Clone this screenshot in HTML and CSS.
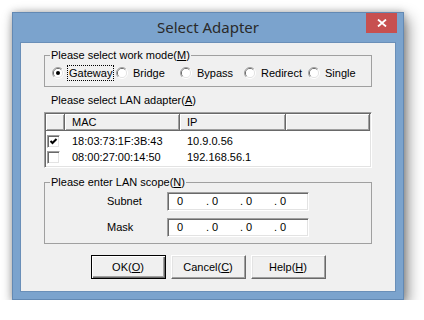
FILE: index.html
```html
<!DOCTYPE html>
<html>
<head>
<meta charset="utf-8">
<link rel="stylesheet" href="styles.css">
</head>
<body>
<div class="window">
  <div class="titlebar">
    <div></div>
    <div class="title">Select Adapter</div>
    <div class="tb-end">
      <div class="close">
        <svg width="10" height="8" viewBox="0 0 10 8"><path d="M1 0.5 L9 7.5 M9 0.5 L1 7.5" stroke="#fff" stroke-width="1.8" fill="none"/></svg>
      </div>
    </div>
  </div>
  <div class="client">
    <fieldset class="group mode">
      <legend>Please select work mode(<u>M</u>)</legend>
      <div class="radios">
        <div class="radio">
          <svg class="rb" viewBox="0 0 12 12"><path d="M2.1 9.9 A5.5 5.5 0 0 1 9.9 2.1" stroke="#a0a0a0" fill="none"/><path d="M9.9 2.1 A5.5 5.5 0 0 1 2.1 9.9" stroke="#fff" fill="none"/><path d="M2.8 9.2 A4.5 4.5 0 0 1 9.2 2.8" stroke="#696969" fill="none"/><path d="M9.2 2.8 A4.5 4.5 0 0 1 2.8 9.2" stroke="#e3e3e3" fill="none"/><circle cx="6" cy="6" r="4" fill="#fff"/><circle cx="6" cy="6" r="2" fill="#000"/></svg>
          <span class="rl focus">Gateway</span>
        </div>
        <div class="radio">
          <svg class="rb" viewBox="0 0 12 12"><path d="M2.1 9.9 A5.5 5.5 0 0 1 9.9 2.1" stroke="#a0a0a0" fill="none"/><path d="M9.9 2.1 A5.5 5.5 0 0 1 2.1 9.9" stroke="#fff" fill="none"/><path d="M2.8 9.2 A4.5 4.5 0 0 1 9.2 2.8" stroke="#696969" fill="none"/><path d="M9.2 2.8 A4.5 4.5 0 0 1 2.8 9.2" stroke="#e3e3e3" fill="none"/><circle cx="6" cy="6" r="4" fill="#fff"/></svg>
          <span class="rl">Bridge</span>
        </div>
        <div class="radio">
          <svg class="rb" viewBox="0 0 12 12"><path d="M2.1 9.9 A5.5 5.5 0 0 1 9.9 2.1" stroke="#a0a0a0" fill="none"/><path d="M9.9 2.1 A5.5 5.5 0 0 1 2.1 9.9" stroke="#fff" fill="none"/><path d="M2.8 9.2 A4.5 4.5 0 0 1 9.2 2.8" stroke="#696969" fill="none"/><path d="M9.2 2.8 A4.5 4.5 0 0 1 2.8 9.2" stroke="#e3e3e3" fill="none"/><circle cx="6" cy="6" r="4" fill="#fff"/></svg>
          <span class="rl">Bypass</span>
        </div>
        <div class="radio">
          <svg class="rb" viewBox="0 0 12 12"><path d="M2.1 9.9 A5.5 5.5 0 0 1 9.9 2.1" stroke="#a0a0a0" fill="none"/><path d="M9.9 2.1 A5.5 5.5 0 0 1 2.1 9.9" stroke="#fff" fill="none"/><path d="M2.8 9.2 A4.5 4.5 0 0 1 9.2 2.8" stroke="#696969" fill="none"/><path d="M9.2 2.8 A4.5 4.5 0 0 1 2.8 9.2" stroke="#e3e3e3" fill="none"/><circle cx="6" cy="6" r="4" fill="#fff"/></svg>
          <span class="rl">Redirect</span>
        </div>
        <div class="radio">
          <svg class="rb" viewBox="0 0 12 12"><path d="M2.1 9.9 A5.5 5.5 0 0 1 9.9 2.1" stroke="#a0a0a0" fill="none"/><path d="M9.9 2.1 A5.5 5.5 0 0 1 2.1 9.9" stroke="#fff" fill="none"/><path d="M2.8 9.2 A4.5 4.5 0 0 1 9.2 2.8" stroke="#696969" fill="none"/><path d="M9.2 2.8 A4.5 4.5 0 0 1 2.8 9.2" stroke="#e3e3e3" fill="none"/><circle cx="6" cy="6" r="4" fill="#fff"/></svg>
          <span class="rl">Single</span>
        </div>
      </div>
    </fieldset>

    <div class="label">Please select LAN adapter(<u>A</u>)</div>

    <div class="list">
      <div class="lv-head">
        <div class="hc"></div>
        <div class="hc">MAC</div>
        <div class="hc">IP</div>
        <div class="hc"></div>
      </div>
      <div class="lv-row first">
        <div class="cbcell"><div class="cb"><svg width="11" height="11" viewBox="0 0 11 11"><path d="M2.5 5 L4.5 7 L8.5 3" stroke="#000" stroke-width="2" fill="none"/></svg></div></div>
        <div class="cell">18:03:73:1F:3B:43</div>
        <div class="cell">10.9.0.56</div>
        <div></div>
      </div>
      <div class="lv-row">
        <div class="cbcell"><div class="cb"></div></div>
        <div class="cell">08:00:27:00:14:50</div>
        <div class="cell">192.168.56.1</div>
        <div></div>
      </div>
    </div>

    <fieldset class="group scope">
      <legend>Please enter LAN scope(<u>N</u>)</legend>
      <div class="frow">
        <span class="flabel">Subnet</span>
        <div class="ip"><span class="o1">0</span><span class="oc">.<b>0</b></span><span class="oc">.<b>0</b></span><span class="oc">.<b>0</b></span></div>
      </div>
      <div class="frow">
        <span class="flabel">Mask</span>
        <div class="ip"><span class="o1">0</span><span class="oc">.<b>0</b></span><span class="oc">.<b>0</b></span><span class="oc">.<b>0</b></span></div>
      </div>
    </fieldset>

    <div class="buttons">
      <div class="btn default">OK(<u>O</u>)</div>
      <div class="btn">Cancel(<u>C</u>)</div>
      <div class="btn">Help(<u>H</u>)</div>
    </div>
  </div>
</div>
</body>
</html>
```
FILE: styles.css
```css
body {
  margin: 0;
  background: #fff;
  font-family: "Liberation Sans", Arial, sans-serif;
  font-size: 11px;
  color: #000;
}

.window {
  width: 392px;
  height: 288px;
  margin: 12px 0 0 12px;
  box-sizing: border-box;
  border: 1px solid #6389b3;
  background: #7ba3cd;
  padding: 0 7px 7px;
  display: flex;
  flex-direction: column;
  box-shadow: 4px 6px 14px rgba(0, 0, 0, 0.45), 0 0 7px rgba(0, 0, 0, 0.25);
}

.titlebar {
  height: 29px;
  margin: 0 -7px;
  display: grid;
  grid-template-columns: 1fr auto 1fr;
  flex: none;
}

.title {
  font-family: "Noto Sans", "Open Sans", sans-serif;
  font-size: 15px;
  line-height: 29px;
  color: #2a2a2a;
  white-space: nowrap;
}

.tb-end {
  display: flex;
  justify-content: flex-end;
  align-items: flex-start;
}

.close {
  width: 31px;
  height: 20px;
  margin-right: 6px;
  background: #c75050;
  display: flex;
  align-items: center;
  justify-content: center;
}

.client {
  flex: 1;
  background: #f0f0f0;
  border: 1px solid #6a8fb8;
  padding: 6px 23px 0;
  display: flex;
  flex-direction: column;
}

.group {
  margin: 0;
  padding: 3px 0 5px 0;
  border: 1px solid #a0a0a0;
  min-width: 0;
}

.group legend {
  margin-left: 5px;
  padding: 0 1px;
  line-height: 13px;
  height: 13px;
}

.radios {
  display: grid;
  grid-template-columns: repeat(5, 64px);
  margin-left: 7px;
  height: 16px;
}

.radio {
  display: flex;
  align-items: center;
  gap: 3px;
  white-space: nowrap;
}

.rb {
  width: 12px;
  height: 12px;
  flex: none;
}

.rl {
  padding: 0 1px;
  border: 1px dotted transparent;
  line-height: 14px;
}

.rl.focus {
  border-color: #000;
}

.label {
  margin: 7px 0 0 7px;
  line-height: 13px;
}

.list {
  margin-top: 5px;
  height: 56px;
  box-sizing: border-box;
  background: #fff;
  border: 1px solid;
  border-color: #a0a0a0 #fff #fff #a0a0a0;
  box-shadow: inset 1px 1px #696969, inset -1px -1px #e3e3e3;
  padding: 1px;
}

.lv-head,
.lv-row {
  display: grid;
  grid-template-columns: 19px 115px 106px 1fr;
}

.lv-head {
  height: 17px;
}

.hc {
  background: #f0f0f0;
  box-sizing: border-box;
  border-right: 1px solid #696969;
  border-bottom: 1px solid #696969;
  box-shadow: inset 1px 1px #fff, inset -1px -1px #a0a0a0;
  padding-left: 7px;
  line-height: 16px;
}

.lv-row {
  height: 16px;
  line-height: 16px;
}

.lv-row.first {
  margin-top: 2px;
}

.cell {
  padding-left: 7px;
  white-space: nowrap;
}

.cbcell {
  display: flex;
  align-items: center;
  padding-left: 1px;
}

.cb {
  width: 13px;
  height: 13px;
  box-sizing: border-box;
  border: 1px solid;
  border-color: #a0a0a0 #fff #fff #a0a0a0;
  box-shadow: inset 1px 1px #696969, inset -1px -1px #e3e3e3;
  background: #fff;
}

.cb svg {
  display: block;
}

.scope {
  margin-top: 8px;
  padding: 3px 0 6px 0;
}

.frow {
  display: flex;
  align-items: center;
  height: 19px;
  margin-left: 62px;
}

.frow + .frow {
  margin-top: 7px;
}

.flabel {
  width: 60px;
  line-height: 13px;
}

.ip {
  width: 142px;
  height: 19px;
  box-sizing: border-box;
  background: #fff;
  border: 1px solid;
  border-color: #a0a0a0 #fff #fff #a0a0a0;
  box-shadow: inset 1px 1px #696969, inset -1px -1px #e3e3e3;
  display: flex;
  line-height: 17px;
}

.o1 {
  width: 38px;
  box-sizing: border-box;
  padding-left: 9px;
}

.oc {
  width: 34px;
}

.oc b {
  font-weight: normal;
  margin-left: 3px;
}

.buttons {
  display: flex;
  justify-content: center;
  gap: 5px;
  margin-top: 11px;
}

.btn {
  width: 75px;
  height: 24px;
  box-sizing: border-box;
  background: #f0f0f0;
  border: 1px solid;
  border-color: #fff #696969 #696969 #fff;
  box-shadow: inset -1px -1px #a0a0a0, inset 1px 1px #e3e3e3;
  display: flex;
  align-items: center;
  justify-content: center;
}

.btn.default {
  border: 1px solid #000;
  box-shadow: inset 1px 1px #fff, inset -1px -1px #696969, inset -2px -2px #a0a0a0;
}
```
